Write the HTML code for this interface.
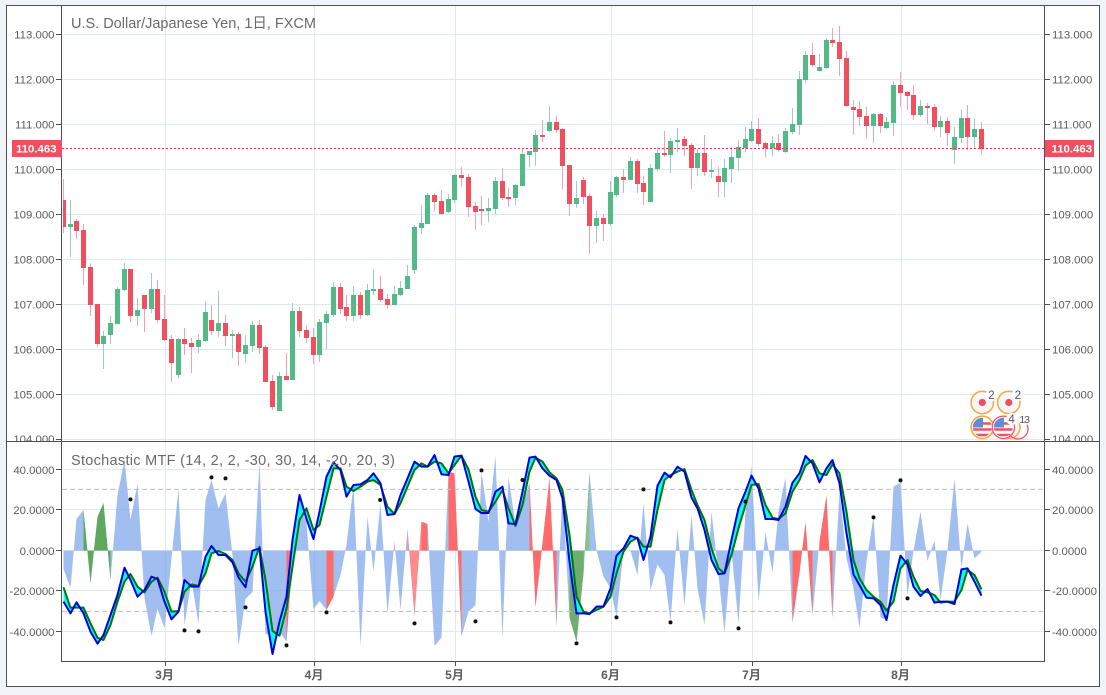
<!DOCTYPE html>
<html><head><meta charset="utf-8"><title>USDJPY</title>
<style>
html,body{margin:0;padding:0;background:#f0f4f8;width:1106px;height:695px;overflow:hidden}
svg{display:block;font-family:"Liberation Sans","Noto Sans CJK JP",sans-serif}
.ax{font-size:11.4px;fill:#5c5c5c}
.ttl{font-size:14.5px;fill:#6a6a6a}
.mo{font-size:12px;fill:#5c5c5c;font-weight:bold;text-anchor:middle}
.rw{fill:none;stroke:#f7a1ae;stroke-width:3}
.gw{fill:none;stroke:#9fcaca;stroke-width:3}
.rb{fill:none;stroke:#ef4f5f;stroke-width:15}
.gb{fill:none;stroke:#53b987;stroke-width:15}
</style></head><body>
<svg width="1106" height="695" viewBox="0 0 1106 695" xmlns="http://www.w3.org/2000/svg">
<defs>
<clipPath id="cp"><rect x="63" y="6" width="981" height="435"/></clipPath>
<clipPath id="co"><rect x="62" y="442" width="982" height="219"/></clipPath>
<clipPath id="la"><rect x="7" y="6" width="1092" height="435"/></clipPath>
<clipPath id="f1"><circle cx="982.3" cy="427.3" r="9.5"/></clipPath>
<clipPath id="f2"><circle cx="1003.3" cy="427.3" r="9.5"/></clipPath>
</defs>
<rect x="6.5" y="5.5" width="1093" height="681" fill="#fff" stroke="#505050"/>
<!-- grid -->
<g stroke="#dfe9f2" stroke-width="1" fill="none">
<path d="M62 34.5H1044M62 79.5H1044M62 124.5H1044M62 169.5H1044M62 214.5H1044M62 259.5H1044M62 304.5H1044M62 349.5H1044M62 394.5H1044M62 439.5H1044"/>
<path d="M62 469.5H1044M62 509.5H1044M62 550.5H1044M62 590.5H1044M62 631.5H1044"/>
<path d="M165.5 6V661M314.5 6V661M455.5 6V661M611.5 6V661M752.5 6V661M901.5 6V661"/>
</g>
<!-- candles -->
<g clip-path="url(#cp)">
<path d="M63.5 179V233M76.5 219V239M83.5 224V285" stroke="#f7a1ae" fill="none"/>
<path d="M70.5 200V257" stroke="#9fcaca" fill="none"/>
<path d="M63.5 200V227M76.5 221V231M83.5 230V268" stroke="#ef4f5f" stroke-width="5" fill="none"/>
<path d="M70.5 224V227" stroke="#53b987" stroke-width="5" fill="none"/>
<g transform="translate(.1667,230) scale(.33333)">
<path class="rw" d="M271 100V258M292 222V351M391 117V276M433 195V306M472 150V279M493 195V333M514 315V456M553 294V375M574 324V429M634 225V315M676 255V348M715 306V408M778 270V372M796 345V456M817 435V540M859 369V450M898 231V321M919 285V339M940 294V402M1021 159V252M1039 195V273M1081 186V267"/>
<path class="gw" d="M310 303V417M331 258V342M352 171V282M373 99V183M412 204V288M454 129V249M535 324V444M595 312V369M616 213V336M655 183V321M697 300V384M736 315V399M757 273V366M838 426V543M877 219V450M958 267V396M979 243V357M1000 156V261M1060 168V273M1102 162V258"/>
<path class="rb" d="M271 111V225M292 222V342M391 117V258M433 195V237M472 177V270M493 267V330M514 327V399M553 327V342M574 339V351M634 270V303M676 279V318M715 312V366M778 285V354M796 351V456M817 453V531M859 438V450M898 243V303M919 300V324M940 321V375M1021 171V237M1039 231V258M1081 195V255"/>
<path class="gb" d="M310 318V342M331 279V315M352 177V282M373 117V180M412 240V258M454 177V237M535 327V435M595 330V351M616 246V333M655 279V303M697 312V318M736 345V372M757 285V348M838 438V543M877 243V450M958 276V375M979 252V279M1000 171V255M1060 195V258M1102 180V255"/>
</g>
<g transform="translate(370.1667,90) scale(.33333)">
<path class="rw" d="M31 558V636M52 612V657M193 309V363M214 300V375M274 231V291M295 252V381M316 336V420M334 318V405M397 234V330M415 294V351M517 90V156M559 78V129M577 114V297M598 225V378M640 261V342M658 309V492M700 372V453M760 237V309M802 207V309M820 258V345M883 123V201M943 138V198M964 159V297M1003 135V258M1045 231V321"/>
<path class="gw" d="M10 537V615M73 588V645M91 573V618M112 525V597M133 405V552M154 345V432M172 309V402M235 312V369M253 252V339M355 324V396M376 261V372M436 282V345M457 177V288M478 183V231M496 120V228M538 48V126M619 273V354M679 363V459M721 273V408M739 258V321M781 201V270M841 222V336M862 171V243M901 144V249M922 114V186M982 177V258M1024 207V264M1063 207V321M1084 171V279M1105 150V243"/>
<path class="rb" d="M31 597V630M52 627V645M193 315V336M214 333V372M274 255V264M295 261V351M316 348V366M334 357V363M397 273V324M415 321V327M517 135V141M559 96V120M577 117V228M598 225V342M640 270V321M658 318V408M700 384V402M760 261V270M802 213V282M820 279V306M883 189V195M943 147V168M964 165V234M1003 189V246M1045 258V276"/>
<path class="gb" d="M10 597V603M73 612V645M91 594V615M112 558V597M133 411V540M154 399V414M172 315V402M235 327V366M253 255V330M355 354V363M376 273V357M436 285V324M457 192V288M478 183V195M496 135V186M538 96V123M619 324V342M679 384V408M721 306V402M739 261V315M781 213V270M841 234V336M862 189V237M901 153V195M922 150V156M982 189V234M1024 240V246M1063 234V276M1084 201V237M1105 171V204"/>
</g>
<g transform="translate(736.1667,10) scale(.33333)">
<path class="rw" d="M67 324V408M88 396V441M127 372V426M229 99V171M289 54V111M310 48V198M331 123V291M352 270V375M370 273V348M391 291V387M433 309V369M493 186V291M514 243V300M532 225V330M574 279V342M595 282V363M634 321V408M694 285V420M736 336V435"/>
<path class="gw" d="M28 351V426M46 333V396M109 378V438M148 354V429M169 294V372M190 183V375M208 123V219M250 132V183M271 84V177M412 309V399M451 321V357M472 213V378M553 270V321M613 318V381M655 351V462M676 300V399M715 327V414"/>
<path class="rb" d="M67 357V402M88 399V414M127 399V420M229 135V165M289 90V99M310 96V147M331 144V288M352 291V300M370 297V321M391 318V348M433 312V348M493 225V249M514 246V258M532 255V315M574 288V294M595 291V351M634 333V369M694 324V381M736 357V417"/>
<path class="gb" d="M28 387V414M46 357V393M109 399V414M148 363V426M169 342V366M190 207V345M208 135V210M250 171V183M271 90V174M412 312V348M451 336V354M472 225V339M553 288V315M613 333V351M655 381V420M676 324V384M715 357V381"/>
</g>
</g>
<!-- price line -->
<path d="M62 148.5H1044" stroke="#f5304c" stroke-dasharray="2 2" fill="none"/>
<!-- oscillator -->
<g clip-path="url(#co)"><g transform="translate(.1667,445) scale(.33333)">
<path fill="#6f9be8" fill-opacity=".65" d="M190 317L190 372 211 429 229 222 250 195 271 414 292 216 310 174 331 405 352 150 373 45 391 225 412 117 433 460 454 573 472 492 493 549 514 340 535 130 553 540 574 405 595 537 616 165 634 105 655 190 676 145 697 330 715 603 736 462 757 441 778 50 796 567 817 570 838 560 859 590 877 340 898 170 919 235 940 493 958 468 979 495 1000 455 1021 390 1039 300 1060 120 1081 603 1102 215 1120 380 1141 175 1162 505 1183 288 1201 495 1222 252 1243 513 1264 230 1282 237 1303 603 1324 578 1345 80 1363 85 1384 575 1405 500 1426 480 1444 80 1465 230 1486 33 1507 582 1525 95 1546 240 1567 180 1588 113 1606 486 1627 295 1648 100 1669 545 1687 130 1708 517 1729 590 1750 385 1768 82 1789 317 1810 395 1831 430 1849 515 1870 317 1891 317 1912 390 1930 175 1951 435 1972 358 1993 390 2011 530 2032 250 2053 483 2074 210 2092 430 2113 540 2134 200 2155 390 2173 563 2194 317 2215 537 2236 200 2254 62 2275 470 2296 262 2317 383 2335 200 2356 98 2377 532 2398 383 2416 233 2437 510 2458 290 2479 152 2497 520 2518 140 2539 340 2560 430 2578 548 2599 350 2620 215 2641 517 2659 525 2680 125 2701 113 2722 450 2740 317 2761 200 2782 348 2803 287 2821 465 2842 317 2863 100 2884 370 2902 235 2923 340 2944 320 2944 317Z"/>
<path fill="#5ea85e" d="M250 317L250 195 271 414 292 216 310 174 331 405 331 317Z"/>
<path fill="#ff6b6b" d="M859 317L859 590 877 340 877 317ZM979 317L979 495 1000 455 1000 317ZM1264 317L1264 230 1282 237 1282 317ZM1345 317L1345 80 1363 85 1384 575 1384 317ZM1588 317L1588 113 1606 486 1627 295 1648 100 1669 545 1669 317ZM2377 317L2377 532 2398 383 2416 233 2437 510 2437 317ZM2458 317L2458 290 2479 152 2497 520 2497 317Z"/>
<path fill="#ff8c8c" d="M1222 317L1222 252 1243 513 1264 230 1264 317Z"/>
<path fill="#6fae6f" d="M1708 317L1708 517 1729 590 1750 385 1750 317Z"/>
<path fill="#8cc08c" d="M1750 317L1750 385 1768 82 1768 317Z"/>
<path fill="none" stroke="#bdbdbd" stroke-width="3" stroke-dasharray="15 9" d="M186 133H3130M186 499H3130"/>
<path fill="#00ffff" d="M190 470L211 505 229 472 250 505 271 560 292 596 310 570 331 510 352 450 373 368 391 405 412 455 433 435 454 395 472 402 493 470 514 523 535 500 553 405 574 425 595 425 616 335 634 303 655 330 676 330 697 352 715 397 736 427 757 317 778 310 796 500 817 627 838 530 859 455 877 285 898 150 919 222 940 282 958 200 979 95 1000 52 1021 75 1039 155 1060 120 1081 118 1102 105 1120 85 1141 115 1162 210 1183 207 1201 150 1222 100 1243 50 1264 65 1282 65 1303 30 1324 88 1345 90 1363 35 1384 32 1405 110 1426 192 1444 204 1465 204 1486 140 1507 125 1525 235 1546 237 1567 140 1588 38 1606 35 1627 70 1648 92 1669 105 1687 160 1708 350 1729 505 1750 505 1768 507 1789 485 1810 484 1831 430 1849 332 1870 310 1891 272 1912 280 1930 345 1951 275 1972 122 1993 83 2011 97 2032 65 2053 80 2074 158 2092 190 2113 255 2134 345 2155 387 2173 385 2194 285 2215 190 2236 140 2254 92 2275 130 2296 222 2317 222 2335 225 2356 185 2377 113 2398 85 2416 33 2437 55 2458 112 2479 70 2497 45 2518 115 2539 265 2560 388 2578 420 2599 458 2620 460 2641 480 2659 525 2680 420 2701 332 2722 358 2740 425 2761 453 2782 432 2803 473 2821 470 2842 470 2863 477 2884 373 2902 370 2923 410 2944 452 2944 433 2923 390 2902 375 2884 435 2863 470 2842 470 2821 473 2803 450 2782 442 2761 438 2740 395 2722 345 2701 370 2680 470 2659 497 2641 470 2620 455 2599 435 2578 400 2560 345 2539 200 2518 85 2497 58 2479 90 2458 85 2437 45 2416 62 2398 105 2377 140 2356 205 2335 222 2317 218 2296 180 2275 117 2254 120 2236 180 2215 250 2194 330 2173 385 2155 370 2134 310 2113 225 2092 180 2074 135 2053 72 2032 80 2011 90 1993 105 1972 195 1951 305 1930 305 1912 278 1891 290 1870 320 1849 385 1831 455 1810 485 1789 495 1768 505 1750 500 1729 455 1708 270 1687 135 1669 100 1648 82 1627 50 1606 38 1588 80 1567 180 1546 243 1525 190 1507 135 1486 170 1465 200 1444 195 1426 155 1405 73 1384 32 1363 60 1345 85 1324 55 1303 50 1282 65 1264 55 1243 75 1222 125 1201 175 1183 207 1162 185 1141 120 1120 105 1102 110 1081 125 1060 138 1039 125 1021 70 1000 70 979 155 958 240 940 255 919 190 898 225 877 365 859 490 838 572 817 558 796 405 778 305 757 365 736 410 715 385 697 345 676 327 655 318 634 325 616 385 595 423 574 418 553 440 535 498 514 500 493 440 472 398 454 410 433 442 412 425 391 387 373 410 352 470 331 540 310 585 292 578 271 535 250 488 229 488 211 488 190 427Z"/>
<path fill="none" stroke="#007300" stroke-width="6" stroke-linejoin="round" d="M190 427L211 488 229 488 250 488 271 535 292 578 310 585 331 540 352 470 373 410 391 387 412 425 433 442 454 410 472 398 493 440 514 500 535 498 553 440 574 418 595 423 616 385 634 325 655 318 676 327 697 345 715 385 736 410 757 365 778 305 796 405 817 558 838 572 859 490 877 365 898 225 919 190 940 255 958 240 979 155 1000 70 1021 70 1039 125 1060 138 1081 125 1102 110 1120 105 1141 120 1162 185 1183 207 1201 175 1222 125 1243 75 1264 55 1282 65 1303 50 1324 55 1345 85 1363 60 1384 32 1405 73 1426 155 1444 195 1465 200 1486 170 1507 135 1525 190 1546 243 1567 180 1588 80 1606 38 1627 50 1648 82 1669 100 1687 135 1708 270 1729 455 1750 500 1768 505 1789 495 1810 485 1831 455 1849 385 1870 320 1891 290 1912 278 1930 305 1951 305 1972 195 1993 105 2011 90 2032 80 2053 72 2074 135 2092 180 2113 225 2134 310 2155 370 2173 385 2194 330 2215 250 2236 180 2254 120 2275 117 2296 180 2317 218 2335 222 2356 205 2377 140 2398 105 2416 62 2437 45 2458 85 2479 90 2497 58 2518 85 2539 200 2560 345 2578 400 2599 435 2620 455 2641 470 2659 497 2680 470 2701 370 2722 345 2740 395 2761 438 2782 442 2803 450 2821 473 2842 470 2863 470 2884 435 2902 375 2923 390 2944 433"/>
<path fill="none" stroke="#0000dc" stroke-width="6" stroke-linejoin="round" d="M190 470L211 505 229 472 250 505 271 560 292 596 310 570 331 510 352 450 373 368 391 405 412 455 433 435 454 395 472 402 493 470 514 523 535 500 553 405 574 425 595 425 616 335 634 303 655 330 676 330 697 352 715 397 736 427 757 317 778 310 796 500 817 627 838 530 859 455 877 285 898 150 919 222 940 282 958 200 979 95 1000 52 1021 75 1039 155 1060 120 1081 118 1102 105 1120 85 1141 115 1162 210 1183 207 1201 150 1222 100 1243 50 1264 65 1282 65 1303 30 1324 88 1345 90 1363 35 1384 32 1405 110 1426 192 1444 204 1465 204 1486 140 1507 125 1525 235 1546 237 1567 140 1588 38 1606 35 1627 70 1648 92 1669 105 1687 160 1708 350 1729 505 1750 505 1768 507 1789 485 1810 484 1831 430 1849 332 1870 310 1891 272 1912 280 1930 345 1951 275 1972 122 1993 83 2011 97 2032 65 2053 80 2074 158 2092 190 2113 255 2134 345 2155 387 2173 385 2194 285 2215 190 2236 140 2254 92 2275 130 2296 222 2317 222 2335 225 2356 185 2377 113 2398 85 2416 33 2437 55 2458 112 2479 70 2497 45 2518 115 2539 265 2560 388 2578 420 2599 458 2620 460 2641 480 2659 525 2680 420 2701 332 2722 358 2740 425 2761 453 2782 432 2803 473 2821 470 2842 470 2863 477 2884 373 2902 370 2923 410 2944 452"/>
<g fill="#111">
<circle cx="391" cy="163" r="6"/><circle cx="553" cy="556" r="6"/><circle cx="595" cy="559" r="6"/><circle cx="634" cy="97" r="6"/><circle cx="676" cy="100" r="6"/><circle cx="736" cy="487" r="6"/><circle cx="859" cy="601" r="6"/><circle cx="979" cy="502" r="6"/>
<circle cx="1140" cy="165" r="6"/><circle cx="1243" cy="535" r="6"/><circle cx="1426" cy="529" r="6"/><circle cx="1444" cy="76" r="6"/><circle cx="1567" cy="105" r="6"/><circle cx="1729" cy="595" r="6"/><circle cx="1849" cy="517" r="6"/><circle cx="1930" cy="133" r="6"/><circle cx="2011" cy="532" r="6"/><circle cx="2215" cy="550" r="6"/><circle cx="2236" cy="170" r="6"/><circle cx="2620" cy="217" r="6"/><circle cx="2701" cy="106" r="6"/><circle cx="2722" cy="460" r="6"/>
</g>
</g></g>
<!-- event icons -->
<g clip-path="url(#cp)">
<g fill="#f5f7fb" stroke="#f9a63b" stroke-width="1.5">
<circle cx="982.3" cy="402.5" r="11.2"/><circle cx="1008.8" cy="402.5" r="11.2"/>
<circle cx="982.3" cy="427.3" r="11.2"/><circle cx="1008.8" cy="427.3" r="11.2"/>
</g>
<circle cx="1003.3" cy="427.3" r="11.2" fill="#fff" stroke="#f5506a" stroke-width="1.3"/>
<circle cx="1018" cy="429" r="10" fill="none" stroke="#f5506a" stroke-width="1.3"/>
<circle cx="982.3" cy="402.5" r="3.6" fill="#ef4f5f"/><circle cx="1008.8" cy="402.5" r="3.6" fill="#ef4f5f"/>
<g clip-path="url(#f1)"><rect x="972" y="417" width="21" height="21" fill="#fff"/><path d="M972 423.5h21M972 429.5h21M972 435h21" stroke="#ef5060" stroke-width="2.6"/><rect x="972" y="417" width="11" height="10.5" fill="#5d8fd8"/></g>
<g clip-path="url(#f2)"><rect x="993" y="417" width="21" height="21" fill="#fff"/><path d="M993 423.5h21M993 429.5h21M993 435h21" stroke="#ef5060" stroke-width="2.6"/><rect x="993" y="417" width="11" height="10.5" fill="#5d8fd8"/></g>
<g fill="#fff"><circle cx="991.5" cy="395" r="6"/><circle cx="1017.8" cy="395" r="6"/><circle cx="1012" cy="419" r="6"/><circle cx="1024" cy="419" r="6.5"/></g>
<g font-size="11.5" fill="#555" text-anchor="middle"><text x="991.5" y="399">2</text><text x="1017.8" y="399">2</text><text x="1011.6" y="423">4</text><text x="1024.2" y="423" font-size="10.5" letter-spacing="-1">13</text></g>
</g>
<!-- frame lines -->
<g stroke="#505050" fill="none">
<path d="M61.5 5V662M1044.5 5V662M6 441.5H1100M61 661.5H1045"/>
<path d="M56 34.5h5M56 79.5h5M56 124.5h5M56 169.5h5M56 214.5h5M56 259.5h5M56 304.5h5M56 349.5h5M56 394.5h5M56 439.5h5M56 469.5h5M56 509.5h5M56 550.5h5M56 590.5h5M56 631.5h5"/>
<path d="M1045 34.5h5M1045 79.5h5M1045 124.5h5M1045 169.5h5M1045 214.5h5M1045 259.5h5M1045 304.5h5M1045 349.5h5M1045 394.5h5M1045 439.5h5M1045 469.5h5M1045 509.5h5M1045 550.5h5M1045 590.5h5M1045 631.5h5"/>
<path d="M165.5 662v4M314.5 662v4M455.5 662v4M611.5 662v4M752.5 662v4M901.5 662v4"/>
</g>
<!-- axis labels -->
<g class="ax" text-anchor="end">
<text x="54.5" y="38.5">113.000</text><text x="54.5" y="83.5">112.000</text><text x="54.5" y="128.5">111.000</text><text x="54.5" y="173.5">110.000</text><text x="54.5" y="218.5">109.000</text><text x="54.5" y="263.5">108.000</text><text x="54.5" y="308.5">107.000</text><text x="54.5" y="353.5">106.000</text><text x="54.5" y="398.5">105.000</text>
<text x="54.5" y="443" clip-path="url(#la)">104.000</text>
<text x="54.5" y="474">40.0000</text><text x="54.5" y="514">20.0000</text><text x="54.5" y="555">0.0000</text><text x="54.5" y="595">-20.0000</text><text x="54.5" y="636">-40.0000</text>
</g>
<g class="ax">
<text x="1052" y="38.5">113.000</text><text x="1052" y="83.5">112.000</text><text x="1052" y="128.5">111.000</text><text x="1052" y="173.5">110.000</text><text x="1052" y="218.5">109.000</text><text x="1052" y="263.5">108.000</text><text x="1052" y="308.5">107.000</text><text x="1052" y="353.5">106.000</text><text x="1052" y="398.5">105.000</text>
<text x="1052" y="443" clip-path="url(#la)">104.000</text>
<text x="1052" y="474">40.0000</text><text x="1052" y="514">20.0000</text><text x="1052" y="555">0.0000</text><text x="1052" y="595">-20.0000</text><text x="1052" y="636">-40.0000</text>
</g>
<rect x="12" y="140" width="50" height="17" fill="#ef4f5f"/>
<rect x="1045" y="140" width="49" height="17" fill="#ef4f5f"/>
<g font-size="11.4" fill="#fff" font-weight="bold">
<text x="16" y="152.5">110.463</text><text x="1051.5" y="152.5">110.463</text>
</g>
<text class="ttl" x="71" y="28" textLength="245" lengthAdjust="spacing">U.S. Dollar/Japanese Yen, 1日, FXCM</text>
<text class="ttl" x="71" y="465" textLength="324" lengthAdjust="spacing">Stochastic MTF (14, 2, 2, -30, 30, 14, -20, 20, 3)</text>
<text class="mo" x="164.5" y="679">3月</text><text class="mo" x="314" y="679">4月</text><text class="mo" x="454.5" y="679">5月</text><text class="mo" x="610.5" y="679">6月</text><text class="mo" x="751.5" y="679">7月</text><text class="mo" x="900.5" y="679">8月</text>
</svg>
</body></html>
